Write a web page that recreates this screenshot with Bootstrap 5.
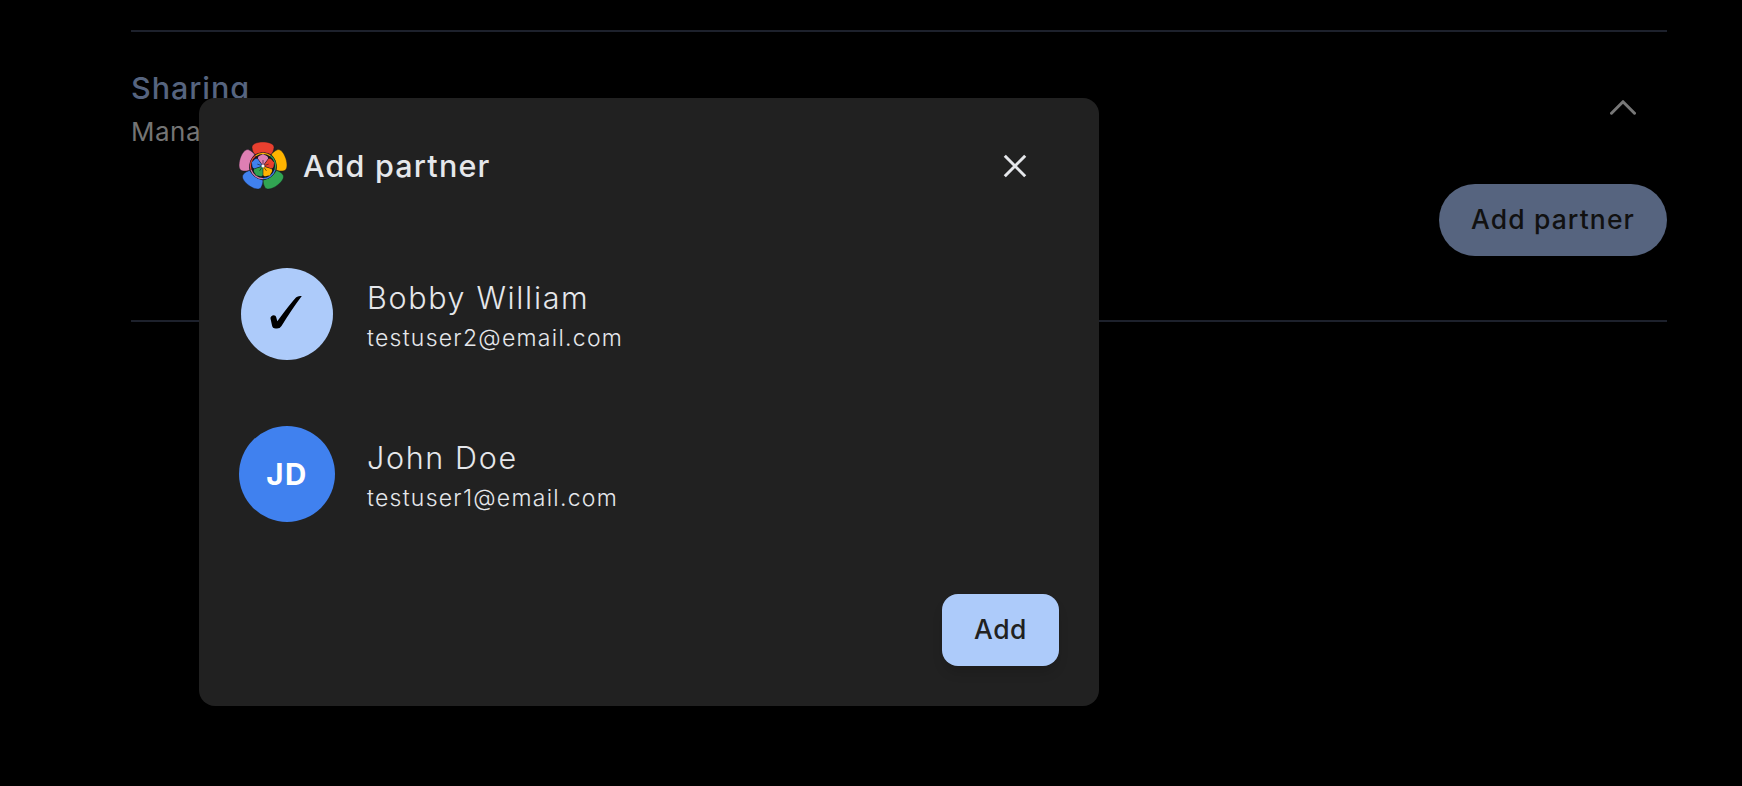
<!DOCTYPE html>
<html lang="en" data-bs-theme="dark">
<head>
<meta charset="utf-8">
<meta name="viewport" content="width=device-width, initial-scale=1">
<title>Sharing settings</title>
<link href="https://cdn.jsdelivr.net/npm/bootstrap@5.3.0/dist/css/bootstrap.min.css" rel="stylesheet">
<style>
body{background:#000;font-family:Inter,"Noto Sans",sans-serif;height:786px;overflow:hidden;position:relative}
.settings{margin:30px 75px 0 131px;border-top:2px solid #1d212c;border-bottom:2px solid #1d212c;padding:32px 0 64px}
.s-title{font-size:30.5px;line-height:48px;font-weight:500;color:#56647f;letter-spacing:.93px}
.s-sub{font-size:26px;line-height:40px;color:#747474;white-space:nowrap;letter-spacing:.49px}
.chev{margin:36px 31px 0 0}
.pill{width:228px;height:72px;background:#56647f;color:#111;font-size:26.5px;font-weight:500;margin-top:32px;letter-spacing:1.13px}
.dialog{left:199px;top:98px;width:900px;height:608px;background:#212121;border-radius:16px;padding:44px 40px 40px;color:#e5e7eb}
.d-title{font-size:30.5px;line-height:48px;font-weight:500;letter-spacing:1.19px}
.d-close{margin-right:32px}
.people{margin-top:44px}
.person{height:160px;gap:32px}
.avatar{width:96px;height:96px;margin-top:32px}
.p-name{font-size:30.5px;line-height:44px;font-weight:350;margin-top:42px;letter-spacing:1.65px}
.p-mail{font-size:23px;line-height:36px;font-weight:350;letter-spacing:1.27px}
.jd{background:#4081ef;color:#fff;font-size:29.5px;font-weight:700;letter-spacing:1.5px}
.add-btn{width:117px;height:72px;border-radius:16px;background:#adcbfa;color:#212121;font-size:26.5px;font-weight:500;margin-top:40px;box-shadow:0 8px 12px -2px rgba(0,0,0,.15);letter-spacing:.55px}
</style>
</head>
<body>
<section class="settings">
  <div class="d-flex justify-content-between">
    <div>
      <div class="s-title">Sharing</div>
      <div class="s-sub">Manage sharing with partners</div>
    </div>
    <svg class="chev" width="26" height="15" viewBox="0 0 26 15" fill="none" stroke="#777" stroke-width="3" stroke-linecap="round" stroke-linejoin="round"><path d="M1.5 13.2 13 1.7 24.5 13.2"/></svg>
  </div>
  <div class="d-flex justify-content-end"><button class="btn rounded-pill p-0 border-0 pill">Add partner</button></div>
</section>

<div class="dialog position-absolute">
  <div class="d-flex align-items-center">
    <svg width="48" height="48" viewBox="-24 -24 48 48" stroke="#17171f" stroke-width=".4">
      <defs>
        <path id="petal" d="M-11-18.5C-11.2-22.5-5-24 0-24S11.2-22.5 11-18.5C10.8-16 9.6-12.8 8-11.4 3-13.9-3-13.9-8-11.4-9.6-12.8-10.8-16-11-18.5Z"/>
        <path id="mini" d="M0-.5-4.8-7C-4.4-10-2-9.3 0-11 2-9.3 4.4-10 4.8-7Z"/>
        <path id="arc" d="M-7.4-10.2A12.6 12.6 0 0 1 7.4-10.2" fill="none" stroke-width="1.2"/>
      </defs>
      <use href="#petal" fill="#e8402f"/>
      <use href="#petal" fill="#ffb400" transform="rotate(72)"/>
      <use href="#petal" fill="#31a452" transform="rotate(144)"/>
      <use href="#petal" fill="#4081ef" transform="rotate(216)"/>
      <use href="#petal" fill="#de7fb3" transform="rotate(288)"/>
      <circle r="13.3" fill="#17171f"/>
      <g stroke="#ffb400"><use href="#arc"/></g>
      <g stroke="#31a452"><use href="#arc" transform="rotate(72)"/></g>
      <g stroke="#4081ef"><use href="#arc" transform="rotate(144)"/></g>
      <g stroke="#de7fb3"><use href="#arc" transform="rotate(216)"/></g>
      <g stroke="#e8402f"><use href="#arc" transform="rotate(288)"/></g>
      <g stroke="none" transform="scale(1.08)">
      <use href="#mini" fill="#de7fb3"/>
      <use href="#mini" fill="#e8402f" transform="rotate(72)"/>
      <use href="#mini" fill="#ffb400" transform="rotate(144)"/>
      <use href="#mini" fill="#31a452" transform="rotate(216)"/>
      <use href="#mini" fill="#4081ef" transform="rotate(288)"/>
      </g>
      <path d="M0 0V-6M0 0 5.7-1.9M0 0 3.5 4.9M0 0-3.5 4.9M0 0-5.7-1.9" stroke-width=".6"/>
      <circle r="1.6" fill="#fff" stroke="none"/>
    </svg>
    <div class="d-title ms-3">Add partner</div>
    <svg class="ms-auto d-close" width="24" height="24" viewBox="0 0 24 24" stroke="#e5e7eb" stroke-width="3"><path d="M1.8 1.8 22.2 22.2M22.2 1.8 1.8 22.2"/></svg>
  </div>
  <div class="people">
    <div class="d-flex person">
      <svg class="avatar" viewBox="0 0 96 96"><circle cx="48" cy="48" r="46" fill="#adcbfa"/><path d="M31.5 52.5C31 49.5 36.5 47.5 37.3 51.5L38.3 55.2Q51 38 57 31.5C58.5 30 61 30 62.8 30Q53 43 42.5 60Q41 62.5 38 62.5C34.5 62.8 33.5 62 32.8 58.5Z" fill="#000"/></svg>
      <div>
        <div class="p-name">Bobby William</div>
        <div class="p-mail">testuser2@email.com</div>
      </div>
    </div>
    <div class="d-flex person">
      <div class="avatar jd rounded-circle d-flex align-items-center justify-content-center">JD</div>
      <div>
        <div class="p-name">John Doe</div>
        <div class="p-mail">testuser1@email.com</div>
      </div>
    </div>
  </div>
  <div class="d-flex justify-content-end"><button class="btn p-0 border-0 add-btn">Add</button></div>
</div>
<script src="https://cdn.jsdelivr.net/npm/bootstrap@5.3.0/dist/js/bootstrap.bundle.min.js"></script>
</body>
</html>
